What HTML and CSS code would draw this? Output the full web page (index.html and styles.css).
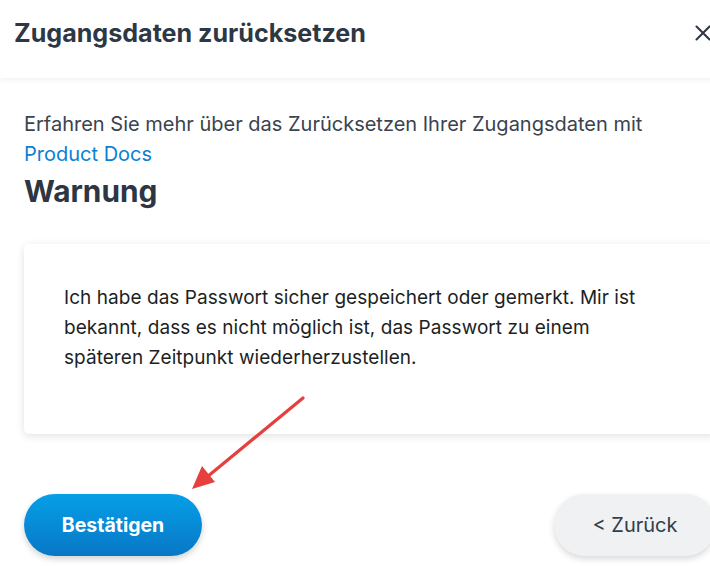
FILE: index.html
```html
<!DOCTYPE html>
<html lang="de">
<head>
<meta charset="utf-8">
<title>Zugangsdaten zurücksetzen</title>
<link rel="stylesheet" href="styles.css">
</head>
<body>
<div class="modal">
  <header class="modal-header">
    <h1 class="modal-title">Zugangsdaten zurücksetzen</h1>
    <button class="close-btn" aria-label="Schließen">
      <svg width="16" height="16" viewBox="0 0 16 16"><path d="M1.5 1.5 L14.5 14.5 M14.5 1.5 L1.5 14.5" stroke="#2d3642" stroke-width="2" stroke-linecap="round" fill="none"/></svg>
    </button>
  </header>
  <main class="modal-body">
    <p class="intro">Erfahren Sie mehr über das Zurücksetzen Ihrer Zugangsdaten mit <a href="#" class="link">Product Docs</a></p>
    <h2 class="section-title">Warnung</h2>
    <div class="card">
      <p class="card-text">Ich habe das Passwort sicher gespeichert oder gemerkt. Mir ist bekannt, dass es nicht möglich ist, das Passwort zu einem späteren Zeitpunkt wiederherzustellen.</p>
    </div>
    <div class="footer">
      <button class="btn btn-primary">Bestätigen</button>
      <button class="btn btn-secondary">&lt; Zurück</button>
    </div>
  </main>
  <svg class="annotation" width="710" height="566" viewBox="0 0 710 566">
    <line x1="303" y1="398" x2="207" y2="477" stroke="#e5403e" stroke-width="3.2" stroke-linecap="round"/>
    <polygon points="192,489 202,466 215,482" fill="#e5403e"/>
  </svg>
</div>
</body>
</html>
```

FILE: styles.css
```css
html, body {
  margin: 0;
  padding: 0;
  background: #ffffff;
  overflow: hidden;
}
body {
  width: 710px;
  height: 566px;
  font-family: Inter, "Noto Sans", sans-serif;
  color: #2d3642;
}
.modal {
  position: relative;
  width: 740px;
}
.modal-header {
  display: flex;
  align-items: flex-start;
  justify-content: space-between;
  height: 78px;
  box-sizing: border-box;
  padding: 18px 29px 0 14px;
  background: #fff;
  box-shadow: 0 2px 5px rgba(0, 0, 0, 0.06);
  position: relative;
  z-index: 1;
}
.modal-title {
  margin: 0;
  font-size: 25.1px;
  line-height: 30px;
  font-weight: 700;
  color: #2e3744;
}
.close-btn {
  border: 0;
  background: transparent;
  padding: 0;
  margin-top: 7px;
  width: 16px;
  height: 16px;
  cursor: pointer;
}
.modal-body {
  padding: 31px 24px 0 24px;
}
.intro {
  margin: 0;
  width: 640px;
  font-size: 20px;
  line-height: 30px;
  color: #3a434e;
}
.link {
  color: #0d7fcf;
  text-decoration: none;
}
.section-title {
  margin: 4px 0 0 0;
  font-size: 29.8px;
  line-height: 36px;
  font-weight: 700;
  color: #2d3642;
}
.card {
  margin-top: 35px;
  background: #fff;
  border-radius: 5px;
  box-shadow: 0 2px 8px rgba(0, 0, 0, 0.12);
  padding: 39px 40px 61px 40px;
}
.card-text {
  margin: 0;
  width: 600px;
  font-size: 19px;
  letter-spacing: 0.05px;
  line-height: 30px;
  color: #1c1f24;
}
.footer {
  display: flex;
  justify-content: space-between;
  margin-top: 60px;
}
.btn {
  height: 62px;
  border: 0;
  border-radius: 31px;
  font-family: Inter, "Noto Sans", sans-serif;
  cursor: pointer;
}
.btn-primary {
  width: 178px;
  background: linear-gradient(180deg, #069fe8 0%, #0877c5 100%);
  color: #fff;
  font-size: 19.5px;
  font-weight: 700;
  box-shadow: 0 3px 6px rgba(0, 0, 0, 0.18);
}
.btn-secondary {
  width: 162px;
  background: #eff1f2;
  color: #333d47;
  font-size: 20px;
  font-weight: 400;
  box-shadow: 0 3px 6px rgba(0, 0, 0, 0.15);
}
.annotation {
  position: absolute;
  left: 0;
  top: 0;
  pointer-events: none;
  z-index: 2;
}
```
